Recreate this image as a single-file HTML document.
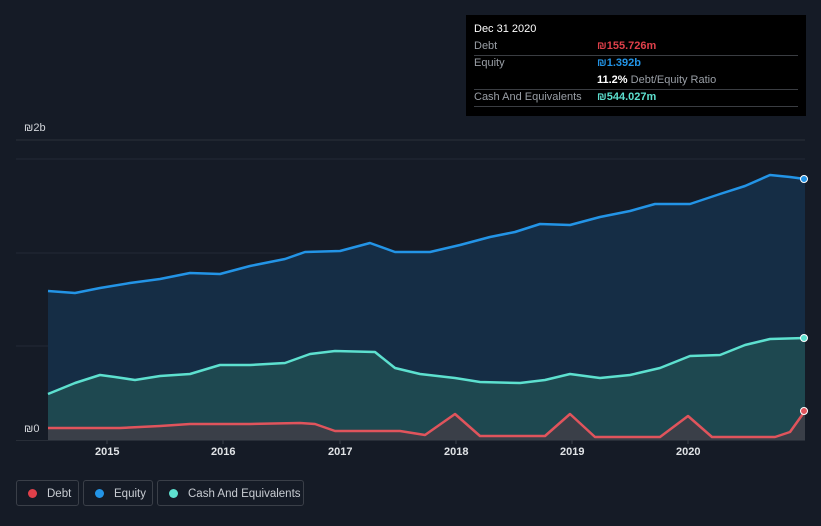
<!DOCTYPE html><html><head><style>
body{margin:0;width:821px;height:526px;background:#151b26;font-family:"Liberation Sans",sans-serif;overflow:hidden;position:relative}
.t{position:absolute;left:466px;top:15px;width:340px;height:101px;background:#000}
.r{position:absolute;left:8px;width:324px;font-size:11px;color:#9a9fa6;border-bottom:1px solid #3a3d42;height:17px;line-height:17px}
.v{position:absolute;left:123px;font-weight:bold}
.lg{position:absolute;top:480px;height:26px;border:1px solid #3a3f48;border-radius:3px;color:#c8ccd2;font-size:11.5px;line-height:26px;box-sizing:border-box;white-space:nowrap}
.lg i{display:inline-block;width:9px;height:9px;border-radius:50%;margin:0 10px 0 11px;vertical-align:-1px}
.x{position:absolute;top:446px;color:#e0e3e6;font-size:11px;font-weight:bold}
</style></head><body>
<svg width="821" height="526" style="position:absolute;left:0;top:0">
<line x1="16" y1="140" x2="805" y2="140" stroke="#2a303a"/>
<line x1="16" y1="159" x2="805" y2="159" stroke="#232935"/>
<line x1="16" y1="253" x2="805" y2="253" stroke="#232935"/>
<line x1="16" y1="346" x2="805" y2="346" stroke="#232935"/>
<path d="M48,291 75,293 100,288 130,283 160,279 190,273 220,274 250,266 285,259 305,252 340,251 355,247 370,243 395,252 430,252 460,245 490,237 515,232 540,224 570,225 600,217 630,211 655,204 690,204 720,194 745,186 770,175 790,177 805,179 L805,440 48,440Z" fill="#152d45"/>
<path d="M48,394 75,383 100,375 115,377 135,380 160,376 190,374 220,365 250,365 285,363 310,354 335,351 375,352 395,368 420,374 455,378 480,382 520,383 545,380 570,374 600,378 630,375 660,368 690,356 720,355 745,345 770,339 805,338 L805,440 48,440Z" fill="#1e4850"/>
<path d="M48,428 80,428 120,428 160,426 190,424 250,424 300,423 315,424 335,431 400,431 425,435 455,414 480,436 545,436 570,414 595,437 660,437 688,416 712,437 775,437 790,432 805,411 L805,440 48,440Z" fill="#3a3f48"/>
<path d="M48,291 75,293 100,288 130,283 160,279 190,273 220,274 250,266 285,259 305,252 340,251 355,247 370,243 395,252 430,252 460,245 490,237 515,232 540,224 570,225 600,217 630,211 655,204 690,204 720,194 745,186 770,175 790,177 805,179" fill="none" stroke="#2394e6" stroke-width="2.5" stroke-linejoin="round"/>
<path d="M48,394 75,383 100,375 115,377 135,380 160,376 190,374 220,365 250,365 285,363 310,354 335,351 375,352 395,368 420,374 455,378 480,382 520,383 545,380 570,374 600,378 630,375 660,368 690,356 720,355 745,345 770,339 805,338" fill="none" stroke="#5de0cf" stroke-width="2.5" stroke-linejoin="round"/>
<path d="M48,428 80,428 120,428 160,426 190,424 250,424 300,423 315,424 335,431 400,431 425,435 455,414 480,436 545,436 570,414 595,437 660,437 688,416 712,437 775,437 790,432 805,411" fill="none" stroke="#e0545c" stroke-width="2.5" stroke-linejoin="round"/>
<line x1="16" y1="440" x2="805" y2="440" stroke="#3a404a"/>
<g stroke="#3a404a"><line x1="107" y1="440" x2="107" y2="444"/><line x1="223" y1="440" x2="223" y2="444"/><line x1="340" y1="440" x2="340" y2="444"/><line x1="456" y1="440" x2="456" y2="444"/><line x1="572" y1="440" x2="572" y2="444"/><line x1="688" y1="440" x2="688" y2="444"/></g>
<circle cx="804" cy="179" r="3.5" fill="#2394e6" stroke="#fff" stroke-width="1"/>
<circle cx="804" cy="338" r="3.5" fill="#5de0cf" stroke="#fff" stroke-width="1"/>
<circle cx="804" cy="411" r="3.5" fill="#e0545c" stroke="#fff" stroke-width="1"/>
</svg>
<div style="position:absolute;left:24px;top:122px;color:#d0d3d8;font-size:11px">₪2b</div>
<div style="position:absolute;left:16px;top:420px;width:32px;height:20px;background:#151b26;color:#d0d3d8;font-size:11px;line-height:18px;padding-left:8px;box-sizing:border-box">₪0</div>
<div class="x" style="left:95px">2015</div><div class="x" style="left:211px">2016</div><div class="x" style="left:328px">2017</div><div class="x" style="left:444px">2018</div><div class="x" style="left:560px">2019</div><div class="x" style="left:676px">2020</div>
<div class="t">
<div style="position:absolute;left:8px;top:8px;color:#fff;font-size:11px">Dec 31 2020</div>
<div class="r" style="top:23px">Debt<span class="v" style="color:#e0404a">₪155.726m</span></div>
<div class="r" style="top:40px;border:none">Equity<span class="v" style="color:#2394e6">₪1.392b</span></div>
<div class="r" style="top:57px"><span class="v" style="color:#fff">11.2% <span style="color:#9a9fa6;font-weight:normal">Debt/Equity Ratio</span></span></div>
<div class="r" style="top:74px">Cash And Equivalents<span class="v" style="color:#5de0cf">₪544.027m</span></div>
</div>
<div class="lg" style="left:16px;width:63px"><i style="background:#e0404a"></i>Debt</div>
<div class="lg" style="left:83px;width:70px"><i style="background:#2394e6"></i>Equity</div>
<div class="lg" style="left:157px;width:147px"><i style="background:#5de0cf"></i>Cash And Equivalents</div>
</body></html>
